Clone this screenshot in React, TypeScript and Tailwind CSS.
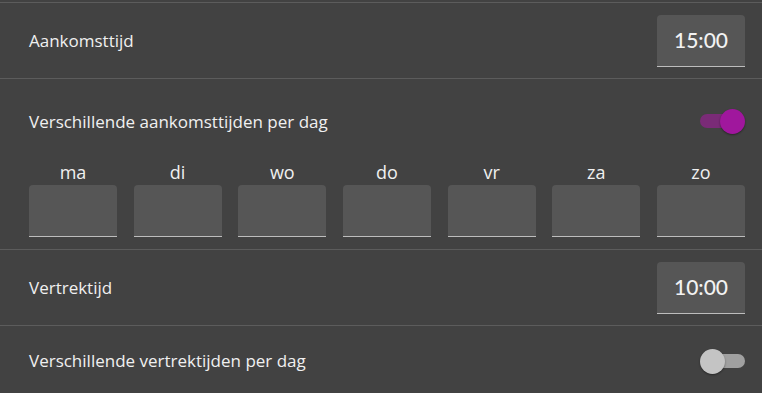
import React, { useState } from 'react';

const days = ['ma', 'di', 'wo', 'do', 'vr', 'za', 'zo'];

const TimeBox: React.FC<{ value: string }> = ({ value }) => (
  <div className="w-[88px] h-[52px] bg-[#565656] rounded-t-[4px] border-b border-[#bdbdbd] flex items-center justify-center text-[21px] text-[#f2f2f2] font-['Lato',sans-serif]">
    {value}
  </div>
);

const Toggle: React.FC<{ on: boolean; onClick: () => void }> = ({ on, onClick }) => (
  <button onClick={onClick} className="relative w-[45px] h-[25px] shrink-0">
    <span
      className={`absolute top-[5px] h-[14px] w-[35px] rounded-full ${
        on ? 'left-0 bg-[#7a2b77]' : 'left-[10px] bg-[#a0a0a0]'
      }`}
    />
    <span
      className={`absolute top-0 h-[25px] w-[25px] rounded-full shadow-[0_1px_2px_rgba(0,0,0,0.4)] ${
        on ? 'left-[20px] bg-[#a0179d]' : 'left-0 bg-[#c4c4c4]'
      }`}
    />
  </button>
);

export default function App() {
  const [arrival, setArrival] = useState(true);
  const [departure, setDeparture] = useState(false);

  return (
    <div className="w-[762px] h-[393px] overflow-hidden bg-[#424242] text-[#f0f0f0] font-['Open_Sans',sans-serif] font-medium pt-[2px]">
      <div className="border-t border-[#5c5c5c]" />

      {/* Aankomsttijd */}
      <div className="h-[76px] pl-[29px] pr-[17px] flex items-center justify-between border-b border-[#5c5c5c]">
        <span className="text-[17px]">Aankomsttijd</span>
        <TimeBox value="15:00" />
      </div>

      {/* Verschillende aankomsttijden */}
      <div className="pl-[29px] pr-[17px] pt-[30px] pb-[12px] border-b border-[#5c5c5c]">
        <div className="flex items-center justify-between h-[25px]">
          <span className="text-[17px]">Verschillende aankomsttijden per dag</span>
          <Toggle on={arrival} onClick={() => setArrival(!arrival)} />
        </div>
        <div className="grid grid-cols-7 gap-x-[16.7px] mt-[27px]">
          {days.map(d => (
            <div key={d} className="flex flex-col items-center">
              <span className="text-[18px] leading-[22px] mb-[2px]">{d}</span>
              <div className="w-full h-[52px] bg-[#565656] rounded-t-[4px] border-b border-[#bdbdbd]" />
            </div>
          ))}
        </div>
      </div>

      {/* Vertrektijd */}
      <div className="h-[76px] pl-[29px] pr-[17px] flex items-center justify-between border-b border-[#5c5c5c]">
        <span className="text-[17px]">Vertrektijd</span>
        <TimeBox value="10:00" />
      </div>

      {/* Verschillende vertrektijden */}
      <div className="h-[70px] pl-[29px] pr-[17px] flex items-center justify-between">
        <span className="text-[17px]">Verschillende vertrektijden per dag</span>
        <Toggle on={departure} onClick={() => setDeparture(!departure)} />
      </div>
    </div>
  );
}
